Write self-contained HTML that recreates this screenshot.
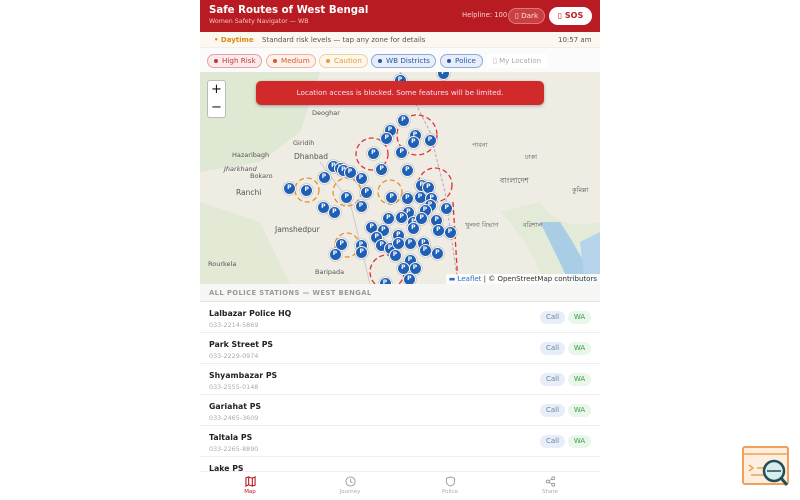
<!DOCTYPE html>
<html><head><meta charset="utf-8"><style>
*{box-sizing:border-box;margin:0;padding:0}
body{width:800px;height:500px;background:#fff;font-family:"DejaVu Sans","Liberation Sans",sans-serif;position:relative;overflow:hidden}
#app{position:absolute;left:200px;top:0;width:400px;height:500px;background:#fff;overflow:hidden}
.hdr{height:32px;background:#b81c22;color:#fff;position:relative}
.hdr .t{position:absolute;left:9px;top:5px;font-size:10.2px;font-weight:bold}
.hdr .s{position:absolute;left:9px;top:18px;font-size:6.3px;color:#f3c2c2}
.hdr .h{position:absolute;left:262px;top:11px;font-size:6.8px;color:#f6d0d0}
.hdr .dk{position:absolute;left:308px;top:8px;width:37px;height:16px;border-radius:8px;background:#c9403f;border:1px solid #e07a78;font-size:7.2px;text-align:center;line-height:14px;color:#fde}
.hdr .sos{position:absolute;left:349px;top:7px;width:43px;height:18px;border-radius:9px;background:#fff;color:#b81c22;font-weight:bold;font-size:8px;text-align:center;line-height:18px}
.sub{height:16px;background:#fdf8ef;position:relative;font-size:7px;color:#555;border-bottom:1px solid #eee}
.sub span{position:absolute;top:3.5px}
.chips{height:24px;position:relative;background:#fbfbfb}
.chip{position:absolute;top:6px;height:14px;border-radius:7px;font-size:7.2px;line-height:12px;padding-left:14px;border:1px solid}
.chip:before{content:"";position:absolute;left:6px;top:4px;width:4px;height:4px;border-radius:50%;background:currentColor}
.map{position:absolute;top:72px;left:0;width:400px;height:212px;background:#efece4;overflow:hidden}
.mk{position:absolute;width:13px;height:13px;border-radius:50%;background:#1f5fb5;border:1.5px solid #fff;color:#fff;font-size:6px;font-weight:bold;text-align:center;line-height:10px;box-shadow:0 0 1px #333}
.lbl{position:absolute;font-size:6.5px;color:#555}
.toast{position:absolute;left:56px;top:9px;width:288px;height:24px;border-radius:5px;background:#d02a2a;color:#fde;font-size:7.2px;text-align:center;line-height:24px;box-shadow:0 1px 3px rgba(0,0,0,.3)}
.zoom{position:absolute;left:7px;top:8px;width:19px;height:38px;background:#fff;border:1px solid #bbb;border-radius:3px;font-size:13px;text-align:center;line-height:18px;color:#111}
.attr{position:absolute;right:0;bottom:0;background:rgba(255,255,255,.85);font-size:7px;padding:1px 3px;color:#333}
.sec{position:absolute;top:284px;left:0;width:400px;height:18px;background:#f6f6f4;font-size:6.8px;font-weight:bold;color:#999;letter-spacing:.4px;padding:5px 9px;border-bottom:1px solid #e5e5e5}
.row{position:absolute;left:0;width:400px;height:31px;border-bottom:1px solid #eee}
.row .n{position:absolute;left:9px;top:7px;font-size:7.8px;font-weight:bold;color:#222}
.row .p{position:absolute;left:9px;top:19px;font-size:6.4px;color:#aaa}
.row .c{position:absolute;left:340px;top:9px;width:25px;height:13px;border-radius:7px;background:#e8eef7;color:#6782a8;font-size:7px;text-align:center;line-height:13px}
.row .w{position:absolute;left:368px;top:9px;width:23px;height:13px;border-radius:7px;background:#e9f6ea;color:#3c9a4a;font-size:7px;text-align:center;line-height:13px}
.nav{position:absolute;top:471px;left:0;width:400px;height:29px;background:#fff;border-top:1px solid #eee}
.nv{position:absolute;top:4px;width:60px;text-align:center;font-size:5.5px;color:#aaa}
.nv svg{display:block;margin:0 auto 2px}
</style></head><body>
<div id="app">
<div class="hdr"><div class="t">Safe Routes of West Bengal</div><div class="s">Women Safety Navigator — WB</div><div class="h">Helpline: 100</div><div class="dk">▯ Dark</div><div class="sos">▯ SOS</div></div>
<div class="sub"><span style="left:14px;color:#d98b1c;font-weight:bold">• Daytime</span><span style="left:62px">Standard risk levels — tap any zone for details</span><span style="left:358px">10:57 am</span></div>
<div class="chips">
<div class="chip" style="left:7px;width:55px;color:#c0393f;border-color:#e6a0a3;background:#fbeaea">High Risk</div>
<div class="chip" style="left:66px;width:50px;color:#d9582c;border-color:#efb29a;background:#fdf1ec">Medium</div>
<div class="chip" style="left:119px;width:49px;color:#e59a3e;border-color:#f1cf9f;background:#fef7ec">Caution</div>
<div class="chip" style="left:171px;width:65px;color:#2456a6;border-color:#8fa9d6;background:#e8eef9">WB Districts</div>
<div class="chip" style="left:240px;width:43px;color:#2456a6;border-color:#8fa9d6;background:#e8eef9">Police</div>
<div style="position:absolute;left:287px;top:6px;width:60px;height:14px;background:#fff;font-size:7px;color:#aaa;line-height:14px;padding-left:6px">▯ My Location</div>
</div>
<div class="map" id="map">
<svg width="400" height="212" style="position:absolute;left:0;top:0">
<path d="M0 0 L120 0 L100 60 L60 90 L0 100Z" fill="#dfe8d2"/>
<path d="M0 130 L60 150 L90 212 L0 212Z" fill="#e2ead6"/>
<path d="M300 140 Q330 170 345 212 L400 212 L400 150 Q360 160 340 130Z" fill="#e3ebd8"/>
<path d="M340 150 Q355 180 370 212 L395 212 Q380 180 360 150Z" fill="#a9cde5"/>
<path d="M380 170 L400 160 L400 212 L385 212Z" fill="#b5d3ea"/>
<path d="M200 0 L230 60 L245 120 L258 212" stroke="#c99ab8" stroke-width="1" fill="none" stroke-dasharray="3 2"/>
<path d="M120 90 L150 130 L170 212" stroke="#ccc" fill="none"/>
<g fill="none" stroke-dasharray="5 3" stroke-width="1.3">
<circle cx="172" cy="82" r="16" stroke="#d33"/>
<circle cx="217" cy="63" r="20" stroke="#d33"/>
<circle cx="235" cy="113" r="17" stroke="#d33"/>
<circle cx="107" cy="118" r="12" stroke="#e8902a"/>
<circle cx="147" cy="120" r="14" stroke="#e8902a"/>
<circle cx="190" cy="120" r="12" stroke="#e8902a"/>
<circle cx="147" cy="173" r="12" stroke="#e8902a"/>
<circle cx="187" cy="200" r="17" stroke="#d33"/>
<path d="M253 130 L258 212" stroke="#d33"/>
</g></svg>
<div class="lbl" style="left:112px;top:37px">Deoghar</div>
<div class="lbl" style="left:93px;top:67px">Giridih</div>
<div class="lbl" style="left:32px;top:79px">Hazaribagh</div>
<div class="lbl" style="left:94px;top:80px;font-size:7.5px">Dhanbad</div>
<div class="lbl" style="left:24px;top:93px;font-style:italic">Jharkhand</div>
<div class="lbl" style="left:50px;top:100px">Bokaro</div>
<div class="lbl" style="left:36px;top:116px;font-size:7.5px">Ranchi</div>
<div class="lbl" style="left:75px;top:153px;font-size:7.5px">Jamshedpur</div>
<div class="lbl" style="left:8px;top:188px">Rourkela</div>
<div class="lbl" style="left:115px;top:196px">Baripada</div>
<div class="lbl" style="left:300px;top:104px;font-size:7.5px">বাংলাদেশ</div>
<div class="lbl" style="left:272px;top:68px">পাবনা</div>
<div class="lbl" style="left:325px;top:80px">ঢাকা</div>
<div class="lbl" style="left:323px;top:148px">বরিশাল</div>
<div class="lbl" style="left:265px;top:148px">খুলনা বিভাগ</div>
<div class="lbl" style="left:372px;top:113px">কুমিল্লা</div>
<div class="zoom">+<br>−</div>
<div class="toast">Location access is blocked. Some features will be limited.</div>
<div class="attr"><span style="color:#2a6fc9">▬ Leaflet</span> | © OpenStreetMap contributors</div>
</div>
<div class="sec">ALL POLICE STATIONS — WEST BENGAL</div>
<div class="row" style="top:302px"><div class="n">Lalbazar Police HQ</div><div class="p">033-2214-5869</div><div class="c">Call</div><div class="w">WA</div></div>
<div class="row" style="top:333px"><div class="n">Park Street PS</div><div class="p">033-2229-0974</div><div class="c">Call</div><div class="w">WA</div></div>
<div class="row" style="top:364px"><div class="n">Shyambazar PS</div><div class="p">033-2555-0148</div><div class="c">Call</div><div class="w">WA</div></div>
<div class="row" style="top:395px"><div class="n">Gariahat PS</div><div class="p">033-2465-3609</div><div class="c">Call</div><div class="w">WA</div></div>
<div class="row" style="top:426px"><div class="n">Taltala PS</div><div class="p">033-2265-8890</div><div class="c">Call</div><div class="w">WA</div></div>
<div class="row" style="top:457px"><div class="n">Lake PS</div></div>
<div class="nav">
<div class="nv" style="left:20px;color:#b81c22"><svg width="11" height="11" viewBox="0 0 12 12" fill="none" stroke="#b81c22" stroke-width="1.2"><path d="M1 2 L4 1 L8 2.5 L11 1 V10 L8 11 L4 9.5 L1 11Z M4 1 V9.5 M8 2.5 V11"/></svg>Map</div>
<div class="nv" style="left:120px"><svg width="11" height="11" viewBox="0 0 12 12" fill="none" stroke="#999" stroke-width="1"><circle cx="6" cy="6" r="5"/><path d="M6 3 V6 L8 7.5"/></svg>Journey</div>
<div class="nv" style="left:220px"><svg width="11" height="11" viewBox="0 0 12 12" fill="none" stroke="#999" stroke-width="1"><path d="M6 1 L10.5 2.5 V6 Q10.5 9.5 6 11 Q1.5 9.5 1.5 6 V2.5Z"/></svg>Police</div>
<div class="nv" style="left:320px"><svg width="11" height="11" viewBox="0 0 12 12" fill="none" stroke="#999" stroke-width="1"><circle cx="9" cy="2.5" r="1.6"/><circle cx="3" cy="6" r="1.6"/><circle cx="9" cy="9.5" r="1.6"/><path d="M4.4 5.2 L7.6 3.3 M4.4 6.8 L7.6 8.7"/></svg>Share</div>
</div>
</div>
<svg style="position:absolute;left:741px;top:445px" width="50" height="45" viewBox="0 0 50 45">
<rect x="2" y="2" width="45" height="37" rx="2" fill="#fdeedd" stroke="#f0a05a" stroke-width="2"/>
<line x1="2" y1="9" x2="47" y2="9" stroke="#f0a05a" stroke-width="1.5"/>
<path d="M8 20 L12 23 L8 26 M10 30 H24 M16 23 H24" stroke="#f0a05a" stroke-width="1.5" fill="none"/>
<circle cx="33" cy="26" r="10" fill="#d8ecee" stroke="#1f4f57" stroke-width="2.5"/>
<line x1="26" y1="26" x2="40" y2="26" stroke="#1f4f57" stroke-width="1.5"/>
<line x1="40" y1="33" x2="46" y2="40" stroke="#1f4f57" stroke-width="3"/>
</svg>
<script>
var p=[[600,25],[730,5],[610,145],[570,175],[560,200],[645,190],[640,212],[690,205],[520,245],[605,240],[400,283],[420,290],[430,295],[450,300],[372,315],[483,320],[545,293],[622,295],[268,350],[320,355],[500,360],[440,375],[575,375],[622,380],[660,375],[665,340],[685,345],[695,380],[370,405],[403,420],[483,402],[740,408],[690,400],[675,415],[625,420],[565,440],[605,437],[640,450],[665,440],[710,445],[515,465],[550,475],[530,495],[595,490],[640,470],[715,475],[750,480],[425,518],[483,520],[545,520],[570,530],[595,515],[630,515],[670,515],[485,540],[405,548],[585,550],[675,535],[712,545],[630,565],[610,590],[645,590],[628,622],[555,635]];
var m=document.getElementById('map'),h='';
p.forEach(function(a){h+='<div class="mk" style="left:'+(a[0]/3-6.5)+'px;top:'+(a[1]/3-6.5)+'px">P</div>';});
m.insertAdjacentHTML('beforeend',h);
var t=m.querySelector('.toast');m.appendChild(t);m.appendChild(m.querySelector('.zoom'));m.appendChild(m.querySelector('.attr'));
</script>
</body></html>
